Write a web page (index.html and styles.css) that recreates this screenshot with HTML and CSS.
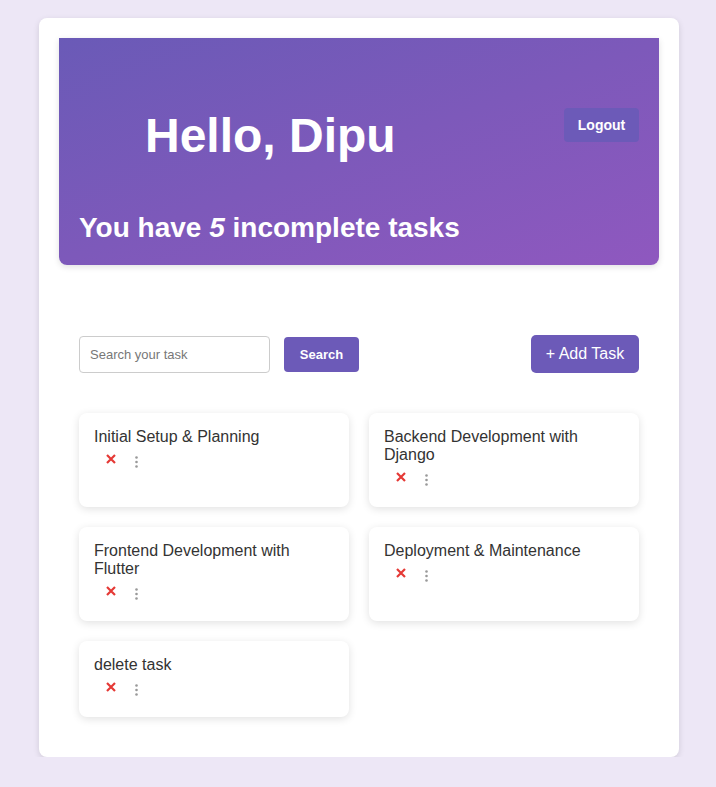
FILE: index.html
```html
<!DOCTYPE html>
<html lang="en">
<head>
<meta charset="utf-8">
<title>Tasks</title>
<link rel="stylesheet" href="styles.css">
</head>
<body>
<div class="container">
  <header class="hero">
    <div class="hero-top">
      <h1 class="greeting">Hello, Dipu</h1>
      <button class="btn btn-logout">Logout</button>
    </div>
    <h2 class="summary">You have <em>5</em> incomplete tasks</h2>
  </header>
  <main class="content">
    <div class="toolbar">
      <input class="search-input" type="text" placeholder="Search your task">
      <button class="btn btn-search">Search</button>
      <button class="btn btn-add">+ Add Task</button>
    </div>
    <div class="task-grid">
      <div class="task-card">
        <div class="task-title">Initial Setup &amp; Planning</div>
        <div class="task-actions">
          <svg class="icon-x" width="10" height="10" viewBox="0 0 10 10"><path d="M1 1L9 9M9 1L1 9"/></svg>
          <svg class="icon-dots" width="3" height="12" viewBox="0 0 3 12"><circle cx="1.5" cy="1.5" r="1.3"/><circle cx="1.5" cy="6" r="1.3"/><circle cx="1.5" cy="10.5" r="1.3"/></svg>
        </div>
      </div>
      <div class="task-card">
        <div class="task-title">Backend Development with Django</div>
        <div class="task-actions">
          <svg class="icon-x" width="10" height="10" viewBox="0 0 10 10"><path d="M1 1L9 9M9 1L1 9"/></svg>
          <svg class="icon-dots" width="3" height="12" viewBox="0 0 3 12"><circle cx="1.5" cy="1.5" r="1.3"/><circle cx="1.5" cy="6" r="1.3"/><circle cx="1.5" cy="10.5" r="1.3"/></svg>
        </div>
      </div>
      <div class="task-card">
        <div class="task-title">Frontend Development with Flutter</div>
        <div class="task-actions">
          <svg class="icon-x" width="10" height="10" viewBox="0 0 10 10"><path d="M1 1L9 9M9 1L1 9"/></svg>
          <svg class="icon-dots" width="3" height="12" viewBox="0 0 3 12"><circle cx="1.5" cy="1.5" r="1.3"/><circle cx="1.5" cy="6" r="1.3"/><circle cx="1.5" cy="10.5" r="1.3"/></svg>
        </div>
      </div>
      <div class="task-card">
        <div class="task-title">Deployment &amp; Maintenance</div>
        <div class="task-actions">
          <svg class="icon-x" width="10" height="10" viewBox="0 0 10 10"><path d="M1 1L9 9M9 1L1 9"/></svg>
          <svg class="icon-dots" width="3" height="12" viewBox="0 0 3 12"><circle cx="1.5" cy="1.5" r="1.3"/><circle cx="1.5" cy="6" r="1.3"/><circle cx="1.5" cy="10.5" r="1.3"/></svg>
        </div>
      </div>
      <div class="task-card">
        <div class="task-title">delete task</div>
        <div class="task-actions">
          <svg class="icon-x" width="10" height="10" viewBox="0 0 10 10"><path d="M1 1L9 9M9 1L1 9"/></svg>
          <svg class="icon-dots" width="3" height="12" viewBox="0 0 3 12"><circle cx="1.5" cy="1.5" r="1.3"/><circle cx="1.5" cy="6" r="1.3"/><circle cx="1.5" cy="10.5" r="1.3"/></svg>
        </div>
      </div>
    </div>
  </main>
</div>
</body>
</html>
```
FILE: styles.css
```css
* { box-sizing: border-box; }

html, body {
  margin: 0;
  padding: 0;
}

body {
  background: #ede7f6;
  font-family: "Liberation Sans", Arial, sans-serif;
  color: #333;
  padding-top: 18px;
}

.container {
  width: 640px;
  margin: 0 0 0 39px;
  background: #fff;
  border-radius: 8px;
  box-shadow: 0 2px 6px rgba(0, 0, 0, 0.12);
  padding: 20px;
}

.hero {
  background: linear-gradient(160deg, #6a5ab7 0%, #7d59ba 50%, #8f58bf 100%);
  border-radius: 0 0 8px 8px;
  box-shadow: 0 2px 6px rgba(0, 0, 0, 0.12);
  padding: 70px 20px 21px;
  color: #fff;
}

.hero-top {
  display: flex;
  align-items: flex-start;
  justify-content: space-between;
}

.greeting {
  margin: 0 0 0 66px;
  font-size: 48px;
  font-weight: bold;
  line-height: normal;
}

.summary {
  margin: 49px 0 0;
  font-size: 28px;
  font-weight: bold;
  line-height: normal;
}

.summary em {
  font-style: italic;
}

.btn {
  border: none;
  color: #fff;
  background: #6c5ab8;
  font-family: "Liberation Sans", Arial, sans-serif;
  cursor: pointer;
}

.btn-logout {
  width: 75px;
  height: 34px;
  border-radius: 4px;
  font-size: 14px;
  font-weight: bold;
  padding: 0;
}

.content {
  padding: 70px 20px 20px;
}

.toolbar {
  display: flex;
  align-items: center;
  height: 38px;
}

.search-input {
  width: 191px;
  height: 37px;
  border: 1px solid #ccc;
  border-radius: 4px;
  padding: 0 10px;
  font-family: "Liberation Sans", Arial, sans-serif;
  font-size: 13px;
  color: #333;
}

.search-input::placeholder {
  color: #777;
}

.btn-search {
  margin-left: 14px;
  width: 75px;
  height: 35px;
  border-radius: 4px;
  font-size: 13px;
  font-weight: bold;
  padding: 0;
}

.btn-add {
  margin-left: auto;
  width: 108px;
  height: 38px;
  border-radius: 5px;
  font-size: 16px;
  padding: 0;
}

.task-grid {
  margin-top: 40px;
  display: grid;
  grid-template-columns: 1fr 1fr;
  gap: 20px;
}

.task-card {
  background: #fff;
  border-radius: 8px;
  box-shadow: 0 2px 8px rgba(0, 0, 0, 0.12);
  padding: 15px;
}

.task-title {
  font-size: 16px;
  line-height: normal;
  color: #333;
}

.task-actions {
  display: flex;
  align-items: flex-start;
  height: 28px;
  padding-left: 12px;
}

.icon-x {
  margin-top: 8px;
  stroke: #e53935;
  stroke-width: 2.2;
  fill: none;
}

.icon-dots {
  margin-top: 10px;
  margin-left: 19px;
  fill: #999;
}
```
